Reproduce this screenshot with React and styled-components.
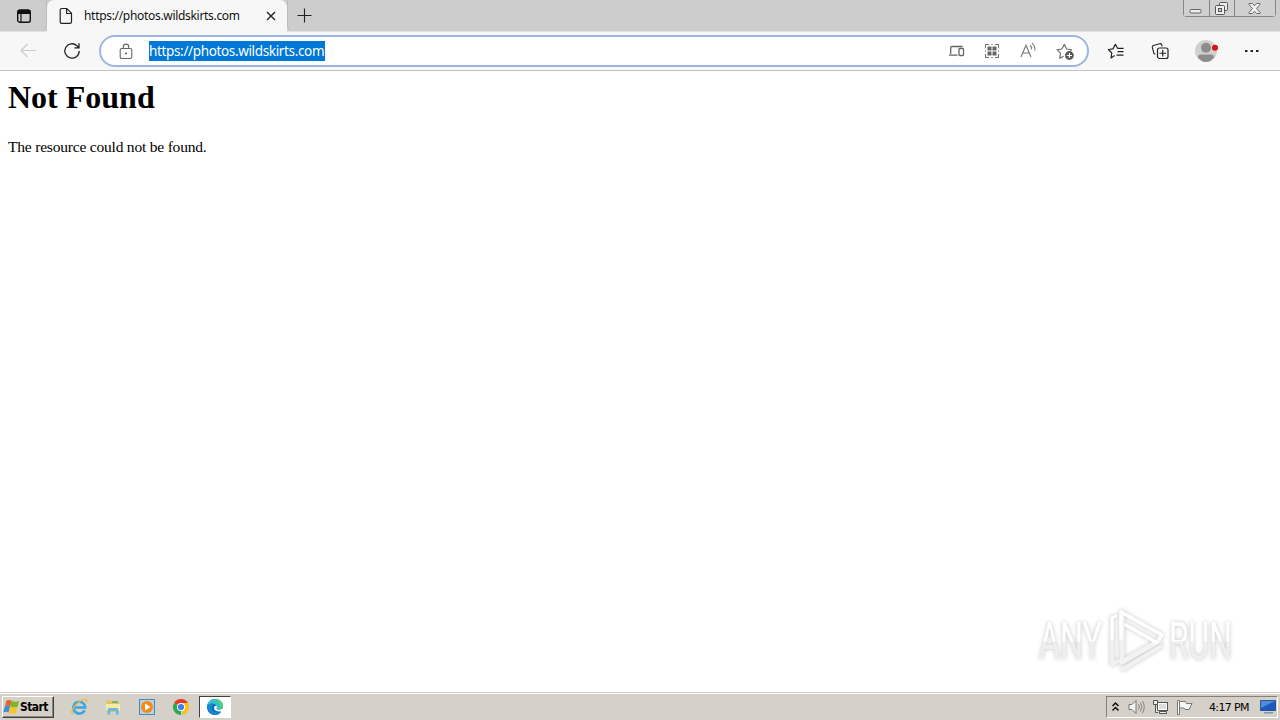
import React from 'react';
import styled, { createGlobalStyle } from 'styled-components';

const URL_TEXT = 'https://photos.wildskirts.com';

function TabMenuIcon() {
  return (
    <Icon $w={16} $h={16} viewBox="0 0 16 16">
      <rect x="1.7" y="2.2" width="12.6" height="12" rx="2" fill="none" stroke="#111" strokeWidth="1.4" />
      <path d="M1.5 3.5a2 2 0 0 1 2-2h9a2 2 0 0 1 2 2V6h-13z" fill="#111" />
      <path d="M5 6v8" stroke="#111" strokeWidth="1.2" />
    </Icon>
  );
}

function PageIcon() {
  return (
    <Icon $w={16} $h={18} viewBox="0 0 16 18">
      <path
        d="M3.8 1.5h5l4.7 4.7v8.6a1.6 1.6 0 0 1-1.6 1.6H3.8a1.6 1.6 0 0 1-1.6-1.6V3.1a1.6 1.6 0 0 1 1.6-1.6zM8.6 1.7v4.8h4.8"
        fill="none"
        stroke="#222"
        strokeWidth="1.2"
      />
    </Icon>
  );
}

function CloseIcon() {
  return (
    <Icon $w={10} $h={10} viewBox="0 0 10 10">
      <path d="M1 1l8 8M9 1L1 9" stroke="#222" strokeWidth="1.4" />
    </Icon>
  );
}

function PlusIcon() {
  return (
    <Icon $w={15} $h={15} viewBox="0 0 15 15">
      <path d="M7.5 .5v14M.5 7.5h14" stroke="#222" strokeWidth="1.1" />
    </Icon>
  );
}

function BackIcon() {
  return (
    <Icon $w={18} $h={16} viewBox="0 0 18 16">
      <path d="M17 7.5H2M8.5 1L2 7.5 8.5 14" fill="none" stroke="#ccc" strokeWidth="1.2" />
    </Icon>
  );
}

function ReloadIcon() {
  return (
    <Icon $w={18} $h={18} viewBox="0 0 18 18">
      <path d="M16.2 9a7.2 7.2 0 1 1-2.3-5.3l1.6 1.6M16 1.2v4.6h-4.6" fill="none" stroke="#222" strokeWidth="1.3" />
    </Icon>
  );
}

function LockIcon() {
  return (
    <Icon $w={14} $h={17} viewBox="0 0 14 17">
      <rect x="1.2" y="5.5" width="11.6" height="10" rx="1.6" fill="none" stroke="#666" strokeWidth="1.1" />
      <path d="M4.3 5.5V3.8a2.7 2.7 0 0 1 5.4 0v1.7" fill="none" stroke="#666" strokeWidth="1.1" />
      <circle cx="7" cy="10.5" r="1" fill="#555" />
    </Icon>
  );
}

function DevicesIcon() {
  return (
    <Icon $w={17} $h={14} viewBox="0 0 17 14">
      <path d="M2.7 10V3.5q0-1 1-1h11M1 11.2h8.5" fill="none" stroke="#666" strokeWidth="1.3" />
      <rect x="11" y="4.5" width="4.5" height="7" rx=".8" fill="#fff" stroke="#666" strokeWidth="1.3" />
    </Icon>
  );
}

function AppsIcon() {
  return (
    <Icon $w={16} $h={16} viewBox="0 0 16 16">
      <path d="M1.5 5V1.5H5M11 1.5h3.5V5M14.5 11v3.5H11M5 14.5H1.5V11" fill="none" stroke="#777" strokeWidth="1.1" />
      <path d="M7 1.5h2M7 14.5h2M1.5 7v2M14.5 7v2" stroke="#aaa" />
      <path d="M3.5 3.5h4v4h-4zM8.5 3.5h4v4h-4zM3.5 8.5h4v4h-4zM8.5 8.5h4v4h-4z" fill="#666" />
    </Icon>
  );
}

function ReadAloudIcon() {
  return (
    <Icon $w={18} $h={18} viewBox="0 0 18 18">
      <path d="M2 15L7 3.2 12 15M3.8 11h6.4" fill="none" stroke="#777" strokeWidth="1.1" />
      <path d="M11 3.3a4 4 0 0 1 1.5 4M13 1.2a8 8 0 0 1 2.8 7.3" fill="none" stroke="#777" strokeWidth="1.1" />
    </Icon>
  );
}

function AddFavoriteIcon() {
  return (
    <Icon $w={19} $h={19} viewBox="0 0 19 19">
      <path
        d="M7.6 14.2l-3.9 2 .8-5L1 7.7l4.8-.7L8.3 2.4 10.6 7l5 .7-1.1 1.1"
        fill="none"
        stroke="#666"
        strokeWidth="1.1"
        strokeLinejoin="round"
      />
      <circle cx="13.4" cy="13.5" r="4.4" fill="#555" />
      <path d="M13.4 10.9v5.2M10.8 13.5H16" stroke="#fff" strokeWidth="1.1" />
    </Icon>
  );
}

function FavoritesIcon() {
  return (
    <Icon $w={18} $h={18} viewBox="0 0 18 18">
      <path
        d="M7.6 13.6L4 16l.8-5L1.4 7.5l4.6-.6 2.4-4.6 2.2 4h6M10.5 9.7h6M9.5 13.2h7"
        fill="none"
        stroke="#222"
        strokeWidth="1.2"
        strokeLinejoin="round"
      />
    </Icon>
  );
}

function CollectionsIcon() {
  return (
    <Icon $w={18} $h={18} viewBox="0 0 18 18">
      <rect x="6.500" y="6" width="10.500" height="10.500" rx="2" fill="none" stroke="#222" strokeWidth="1.2" />
      <path d="M11.750 8v6.500M8.500 11.250H15" stroke="#222" strokeWidth="1.2" />
      <path
        d="M4.300 12.300L3 11.600 1.300 5.400q-.2-1.400 1.100-2l6.300-1.700q1.400-.2 2 1.100l.5 1.500"
        fill="none"
        stroke="#222"
        strokeWidth="1.1"
      />
    </Icon>
  );
}

function ProfileIcon() {
  return (
    <Icon $w={26} $h={24} viewBox="0 0 26 24">
      <circle cx="13" cy="12" r="11" fill="#d2d0ce" />
      <circle cx="13" cy="8.7" r="5" fill="#8e8c8b" />
      <path d="M5 18.3q0-2.800 3-2.800h10q3 0 3 2.800-3.200 4.700-8 4.700t-8-4.700z" fill="#8e8c8b" />
      <circle cx="22" cy="8.8" r="3" fill="#d8101c" />
    </Icon>
  );
}

function MoreIcon() {
  return (
    <Icon $w={14} $h={4} viewBox="0 0 14 4">
      <path d="M0 1h2.500v2H0zM5.500 1H8v2H5.500zM11 1h2.500v2H11z" fill="#222" />
    </Icon>
  );
}

function WatermarkLogo() {
  return (
    <Icon $w={210} $h={70} viewBox="0 0 210 70">
      <defs>
        <linearGradient id="fade" x1="0" y1="0" x2="0" y2="66" gradientUnits="userSpaceOnUse">
          <stop offset=".51" stopColor="#fff" />
          <stop offset=".53" stopColor="#efefef" />
        </linearGradient>
      </defs>
      <g fill="url(#fade)" fontFamily="Roboto, 'Liberation Sans', sans-serif" fontSize="51">
        <text x="1" y="52" textLength="63" lengthAdjust="spacingAndGlyphs">
          ANY
        </text>
        <text x="131" y="52" textLength="63" lengthAdjust="spacingAndGlyphs">
          RUN
        </text>
      </g>
      <g fill="none" strokeLinejoin="round" strokeLinecap="round">
        <path d="M84 5v50l37-21" stroke="#f3f3f3" strokeWidth="5" />
        <path d="M74 11v46l6-3M85 62l38-23M84 34v20" stroke="#f1f1f1" strokeWidth="4" />
        <path d="M78 9l-4 2v21" stroke="#fff" strokeWidth="3" />
        <path d="M83 31V5l41 23-3 4M88 18l30 17" stroke="#fff" strokeWidth="3.500" />
      </g>
    </Icon>
  );
}

function WindowsFlag() {
  return (
    <Icon $w={17} $h={16} viewBox="0 0 17 16">
      <path d="M3.500 1.500q2.800-1.300 5.300.3L7.200 7.500Q4.500 5.800 2 7.300z" fill="#e9602b" />
      <path d="M8.800 1.800q3 1.700 7.200.2l-1.500 5.800q-3.600 1.300-7.300-.3z" fill="#79b72b" />
      <path d="M2 7.300Q4.500 5.800 7.200 7.500L5.500 13.500Q2.800 12 .2 13.300z" fill="#3d8edb" />
      <path d="M7.200 7.500q3.700 1.600 7.300.3L12.800 14q-3.600 1.400-7.300-.5z" fill="#f8c62b" />
    </Icon>
  );
}

function ExplorerIcon() {
  return (
    <Icon $w={18} $h={18} viewBox="0 0 18 18">
      <path d="M14.600 12.300A5.900 5.900 0 1 1 15.200 9.500H4.500" fill="none" stroke="#3ba6e6" strokeWidth="2.600" />
      <path d="M3.500 16C-.5 15.500 3.500 8 9 4s8.500-3 7.500.5" fill="none" stroke="#edb836" strokeWidth="1.300" />
    </Icon>
  );
}

function FolderIcon() {
  return (
    <Icon $w={16} $h={16} viewBox="0 0 16 16">
      <path d="M1 1.500h5L7.500 3H14v10H1z" fill="#e3c463" />
      <path d="M1 5h14v7H1z" fill="#fbeaa4" />
      <path d="M7 3h6" stroke="#5dab58" strokeWidth="1.500" />
      <path d="M2.500 15.500V11Q2.500 9 4.500 9h7q2 0 2 2v4.500H11V12H5v3.500z" fill="#67b7e7" />
    </Icon>
  );
}

function PlayerIcon() {
  return (
    <Icon $w={16} $h={16} viewBox="0 0 16 16">
      <rect x=".5" y=".5" width="15" height="15" fill="#b5d4ea" stroke="#4d87b5" />
      <circle cx="8" cy="8" r="6" fill="#f48a16" />
      <path d="M6 4.500L11.500 8 6 11.500z" fill="#fff" />
    </Icon>
  );
}

function ChromeIcon() {
  return (
    <Icon $w={16} $h={16} viewBox="0 0 16 16">
      <path d="M8 8L1.070 4A8 8 0 0 1 14.930 4z" fill="#e33b2e" />
      <path d="M8 8v8A8 8 0 0 1 1.070 4z" fill="#2da94f" />
      <path d="M8 4h6.930A8 8 0 0 1 8 16l3.500-6z" fill="#fbc116" />
      <circle cx="8" cy="8" r="4" fill="#fff" />
      <circle cx="8" cy="8" r="3.100" fill="#3f7fe8" />
    </Icon>
  );
}

function EdgeIcon() {
  return (
    <Icon $w={18} $h={18} viewBox="0 0 18 18">
      <path d="M1 9a8 8 0 0 1 16 0q0 2.500-3 3l.8 2.500A8 8 0 0 1 1 9z" fill="#0c69b7" />
      <path d="M1 8.500Q2 1 9 1c4.500 0 8 3 8 6.500 0 3-2.300 4.300-5 4.300-1.800 0-2.300-.8-1.600-1.600C11.600 8.500 9.500 5.500 6.500 5.500 4 5.500 2 6.500 1 8.500z" fill="#32c2ca" />
      <path d="M9 1c4.500 0 8 3 8 6.500 0 2-1 3.200-2.500 3.800Q15 5 9 1z" fill="#58d06a" />
      <path d="M6.300 8.500c-1.500 4 2.200 7 8.200 5.600Q12.500 17 9 17C4.500 17 1.200 13 1.100 8.500 2.500 6 5 5.300 7.200 6z" fill="#1688d2" />
      <path d="M8.500 8q-1.500 4.300 2.500 5.300 3.500.7 6.500-1.600l-1-1.200q-2.500 1.700-5.200 1-1.300-.5-.6-1.600.6-1.100-.3-2.200z" fill="#fff" />
    </Icon>
  );
}

function SpeakerIcon() {
  return (
    <Icon $w={17} $h={16} viewBox="0 0 17 16">
      <path d="M1 5.500h3l4-4v13l-4-4H1z" fill="#f5f5f3" stroke="#777" />
      <path d="M10.500 5.200q1.700 2.800 0 5.600M12.500 3.500q2.800 4.500 0 9M14.500 2q3.500 6 0 12" fill="none" stroke="#888" />
    </Icon>
  );
}

function NetworkIcon() {
  return (
    <Icon $w={17} $h={16} viewBox="0 0 17 16">
      <rect x="5.500" y="3.500" width="10" height="8" fill="#ddd" stroke="#555" />
      <path d="M6.500 4.500h8v6h-8z" fill="none" stroke="#fff" />
      <path d="M1.500 1.500h4v4h-4zM3.500 5.500v8h2.500M7.500 12.500h7v2h-7z" fill="#eee" stroke="#555" />
    </Icon>
  );
}

function FlagIcon() {
  return (
    <Icon $w={17} $h={16} viewBox="0 0 17 16">
      <path d="M1.500 1.500h2v14h-2z" fill="#fff" stroke="#777" />
      <path d="M3.500 2.500h6l1 2h5.500l-3 6H9l-1-1.500H3.500z" fill="#f6f6f4" stroke="#777" />
    </Icon>
  );
}

function DesktopIcon() {
  return (
    <Icon $w={16} $h={14} viewBox="0 0 16 14">
      <path d="M.5.500h15v10H.5z" fill="#1c5bbd" stroke="#2b5796" />
      <path d="M1 1h14L1 8z" fill="#4c8edc" />
      <path d="M4 12h9v1.500H4z" fill="#7894b8" />
    </Icon>
  );
}

function App() {
  return (
    <Screen>
      <GlobalStyle />
      <TabStrip>
        <TabMenu>
          <TabMenuIcon />
        </TabMenu>
        <Tab>
          <PageIcon />
          <TabTitle>{URL_TEXT}</TabTitle>
          <CloseIcon />
        </Tab>
        <NewTab>
          <PlusIcon />
        </NewTab>
        <WindowControls>
          <Control $w={25}>
            <Icon $w={13} $h={12} viewBox="0 0 13 12">
              <rect x="1" y="7.500" width="11" height="3.500" rx="1" fill="#eee" stroke="#666" />
            </Icon>
          </Control>
          <Control $w={25}>
            <Icon $w={13} $h={13} viewBox="0 0 13 13">
              <rect x="4.500" y=".5" width="8" height="8" rx="1" fill="#eee" stroke="#555" />
              <rect x=".5" y="3.500" width="9" height="9" rx="1" fill="#eee" stroke="#555" />
              <rect x="3.500" y="6.500" width="3" height="3" fill="#ccc" stroke="#555" />
            </Icon>
          </Control>
          <Control $w={41}>
            <Icon $w={13} $h={11} viewBox="0 0 13 11">
              <path
                d="M1 .5h3.300l2.200 2.300L8.700.5H12v1L8.500 5.500l3.500 4v1H8.700L6.500 8.200l-2.200 2.300H1v-1l3.500-4L1 1.500z"
                fill="#f2f2f2"
                stroke="#666"
              />
            </Icon>
          </Control>
        </WindowControls>
      </TabStrip>

      <Toolbar>
        <ToolButton $w={56}>
          <BackIcon />
        </ToolButton>
        <ToolButton $w={32}>
          <ReloadIcon />
        </ToolButton>
        <AddressBar>
          <LockIcon />
          <Address>{URL_TEXT}</Address>
          <AddressActions>
            <DevicesIcon />
            <AppsIcon />
            <ReadAloudIcon />
            <AddFavoriteIcon />
          </AddressActions>
        </AddressBar>
        <ToolButton $w={54}>
          <FavoritesIcon />
        </ToolButton>
        <ToolButton $w={34}>
          <CollectionsIcon />
        </ToolButton>
        <ToolButton $w={58}>
          <ProfileIcon />
        </ToolButton>
        <ToolButton $w={34}>
          <MoreIcon />
        </ToolButton>
      </Toolbar>

      <Page>
        <Heading>Not Found</Heading>
        <Message>The resource could not be found.</Message>
        <Watermark>
          <WatermarkLogo />
        </Watermark>
      </Page>

      <Taskbar>
        <StartButton>
          <WindowsFlag />
          Start
        </StartButton>
        <QuickLaunch>
          <TaskItem>
            <ExplorerIcon />
          </TaskItem>
          <TaskItem>
            <FolderIcon />
          </TaskItem>
          <TaskItem>
            <PlayerIcon />
          </TaskItem>
          <TaskItem>
            <ChromeIcon />
          </TaskItem>
          <TaskItem $active>
            <EdgeIcon />
          </TaskItem>
        </QuickLaunch>
        <Tray>
          <Icon $w={7} $h={10} viewBox="0 0 7 10">
            <path d="M.5 4l3-3 3 3M.5 8.500l3-3 3 3" fill="none" stroke="#111" strokeWidth="1.500" />
          </Icon>
          <TrayIcons>
            <SpeakerIcon />
            <NetworkIcon />
            <FlagIcon />
          </TrayIcons>
          <Clock>4:17 PM</Clock>
          <DesktopIcon />
        </Tray>
      </Taskbar>
    </Screen>
  );
}

const GlobalStyle = createGlobalStyle`
  body {
    margin: 0;
    overflow: hidden;
  }
  * {
    box-sizing: border-box;
  }
`;

const Icon = styled.svg`
  display: block;
  flex: none;
  overflow: visible;
  width: ${(p) => p.$w}px;
  height: ${(p) => p.$h}px;
`;

const Screen = styled.div`
  display: flex;
  flex-direction: column;
  width: 1280px;
  height: 720px;
  background: #fff;
`;

const TabStrip = styled.header`
  display: flex;
  flex: none;
  height: 32px;
  background: #cdcdcd;
  border-bottom: 1px solid #e2e2e2;
`;

const TabMenu = styled.div`
  display: flex;
  align-items: center;
  justify-content: center;
  width: 47px;
  height: 31px;
  padding-left: 1px;
  border-right: 1px solid #bdbdbd;
  border-bottom-right-radius: 6px;
`;

const Tab = styled.div`
  display: flex;
  align-items: center;
  width: 240px;
  height: 32px;
  padding: 0 11px;
  background: #f7f7f7;
  border-radius: 7px 7px 0 0;
`;

const TabTitle = styled.span`
  flex: 1;
  margin-left: 10px;
  font-family: 'Noto Sans', 'Open Sans', sans-serif;
  font-size: 12px;
  letter-spacing: -0.31px;
  line-height: 16px;
  white-space: nowrap;
  color: #111;
`;

const NewTab = styled.div`
  display: flex;
  align-items: center;
  justify-content: center;
  width: 34px;
  height: 31px;
  border-left: 1px solid #bdbdbd;
  border-bottom-left-radius: 6px;
`;

const WindowControls = styled.div`
  display: flex;
  height: 17px;
  margin-left: auto;
  margin-right: 4px;
  border: 1px solid #858585;
  border-top: 0;
  border-radius: 0 0 4px 4px;
`;

const Control = styled.div`
  display: flex;
  align-items: center;
  justify-content: center;
  width: ${(p) => p.$w}px;
  padding-right: 2px;
  background: #d0d0d0;

  & + & {
    border-left: 1px solid #858585;
  }
`;

const Toolbar = styled.nav`
  display: flex;
  flex: none;
  align-items: center;
  height: 39px;
  background: #f7f7f7;
  border-bottom: 1px solid #c4c4c4;
`;

const ToolButton = styled.div`
  display: flex;
  flex: none;
  align-items: center;
  justify-content: center;
  width: ${(p) => p.$w}px;
`;

const AddressBar = styled.div`
  display: flex;
  flex: none;
  align-items: center;
  width: 990px;
  height: 32px;
  margin-left: 11px;
  padding: 0 12px 0 18px;
  background: #fff;
  border: 2px solid #9db6df;
  border-radius: 16px;
`;

const Address = styled.span`
  width: 176px;
  height: 20px;
  margin-left: 16px;
  font-family: 'Noto Sans', 'Open Sans', sans-serif;
  font-size: 13.5px;
  letter-spacing: -0.35px;
  line-height: 20px;
  white-space: nowrap;
  color: #fff;
  background: #0078d7;
`;

const AddressActions = styled.div`
  display: flex;
  align-items: center;
  gap: 19px;
  margin-left: auto;
`;

const Page = styled.main`
  position: relative;
  flex: 1;
  padding: 6px 8px;
  font-family: 'Liberation Serif', serif;
  color: #000;
`;

const Heading = styled.h1`
  margin: 0;
  font-size: 32px;
  font-weight: 700;
  line-height: 40px;
`;

const Message = styled.p`
  margin: 21px 0 0;
  font-size: 15.5px;
  line-height: 18px;
  letter-spacing: -0.2px;
`;

const Watermark = styled.div`
  position: absolute;
  right: 32px;
  bottom: 15px;
  filter: drop-shadow(0 0 2px #c4c4c4);
`;

const Taskbar = styled.footer`
  display: flex;
  flex: none;
  align-items: center;
  height: 28px;
  padding: 1px 2px 0;
  background: #d5d0c8;
  border-top: 1px solid #d5d0c8;
  box-shadow: inset 0 1px #fff;
`;

const StartButton = styled.div`
  display: flex;
  align-items: center;
  width: 52px;
  height: 22px;
  font: bold 12px 'DejaVu Sans Condensed', 'DejaVu Sans', sans-serif;
  letter-spacing: -0.6px;
  border: 1px solid;
  border-color: #fff #404040 #404040 #fff;
  box-shadow: inset -1px -1px #888;
`;

const QuickLaunch = styled.div`
  display: flex;
  gap: 2px;
  margin-left: 9px;
`;

const TaskItem = styled.div`
  display: flex;
  align-items: center;
  justify-content: center;
  width: 32px;
  height: 22px;
  background: ${(p) => (p.$active ? '#fff' : 'transparent')};
  border: ${(p) => (p.$active ? '1px solid' : '0')};
  border-color: #404040 #fff #fff #404040;
`;

const Tray = styled.div`
  display: flex;
  align-items: center;
  width: 172px;
  height: 22px;
  margin-left: auto;
  padding: 0 1px 0 5px;
  border: 1px solid;
  border-color: #858179 #fff #fff #858179;
`;

const TrayIcons = styled.div`
  display: flex;
  gap: 7px;
  margin-left: 9px;
`;

const Clock = styled.span`
  flex: 1;
  margin-left: 16px;
  font: 11px 'DejaVu Sans', sans-serif;
  letter-spacing: -0.65px;
  white-space: nowrap;
  color: #000;
`;

export default App;
